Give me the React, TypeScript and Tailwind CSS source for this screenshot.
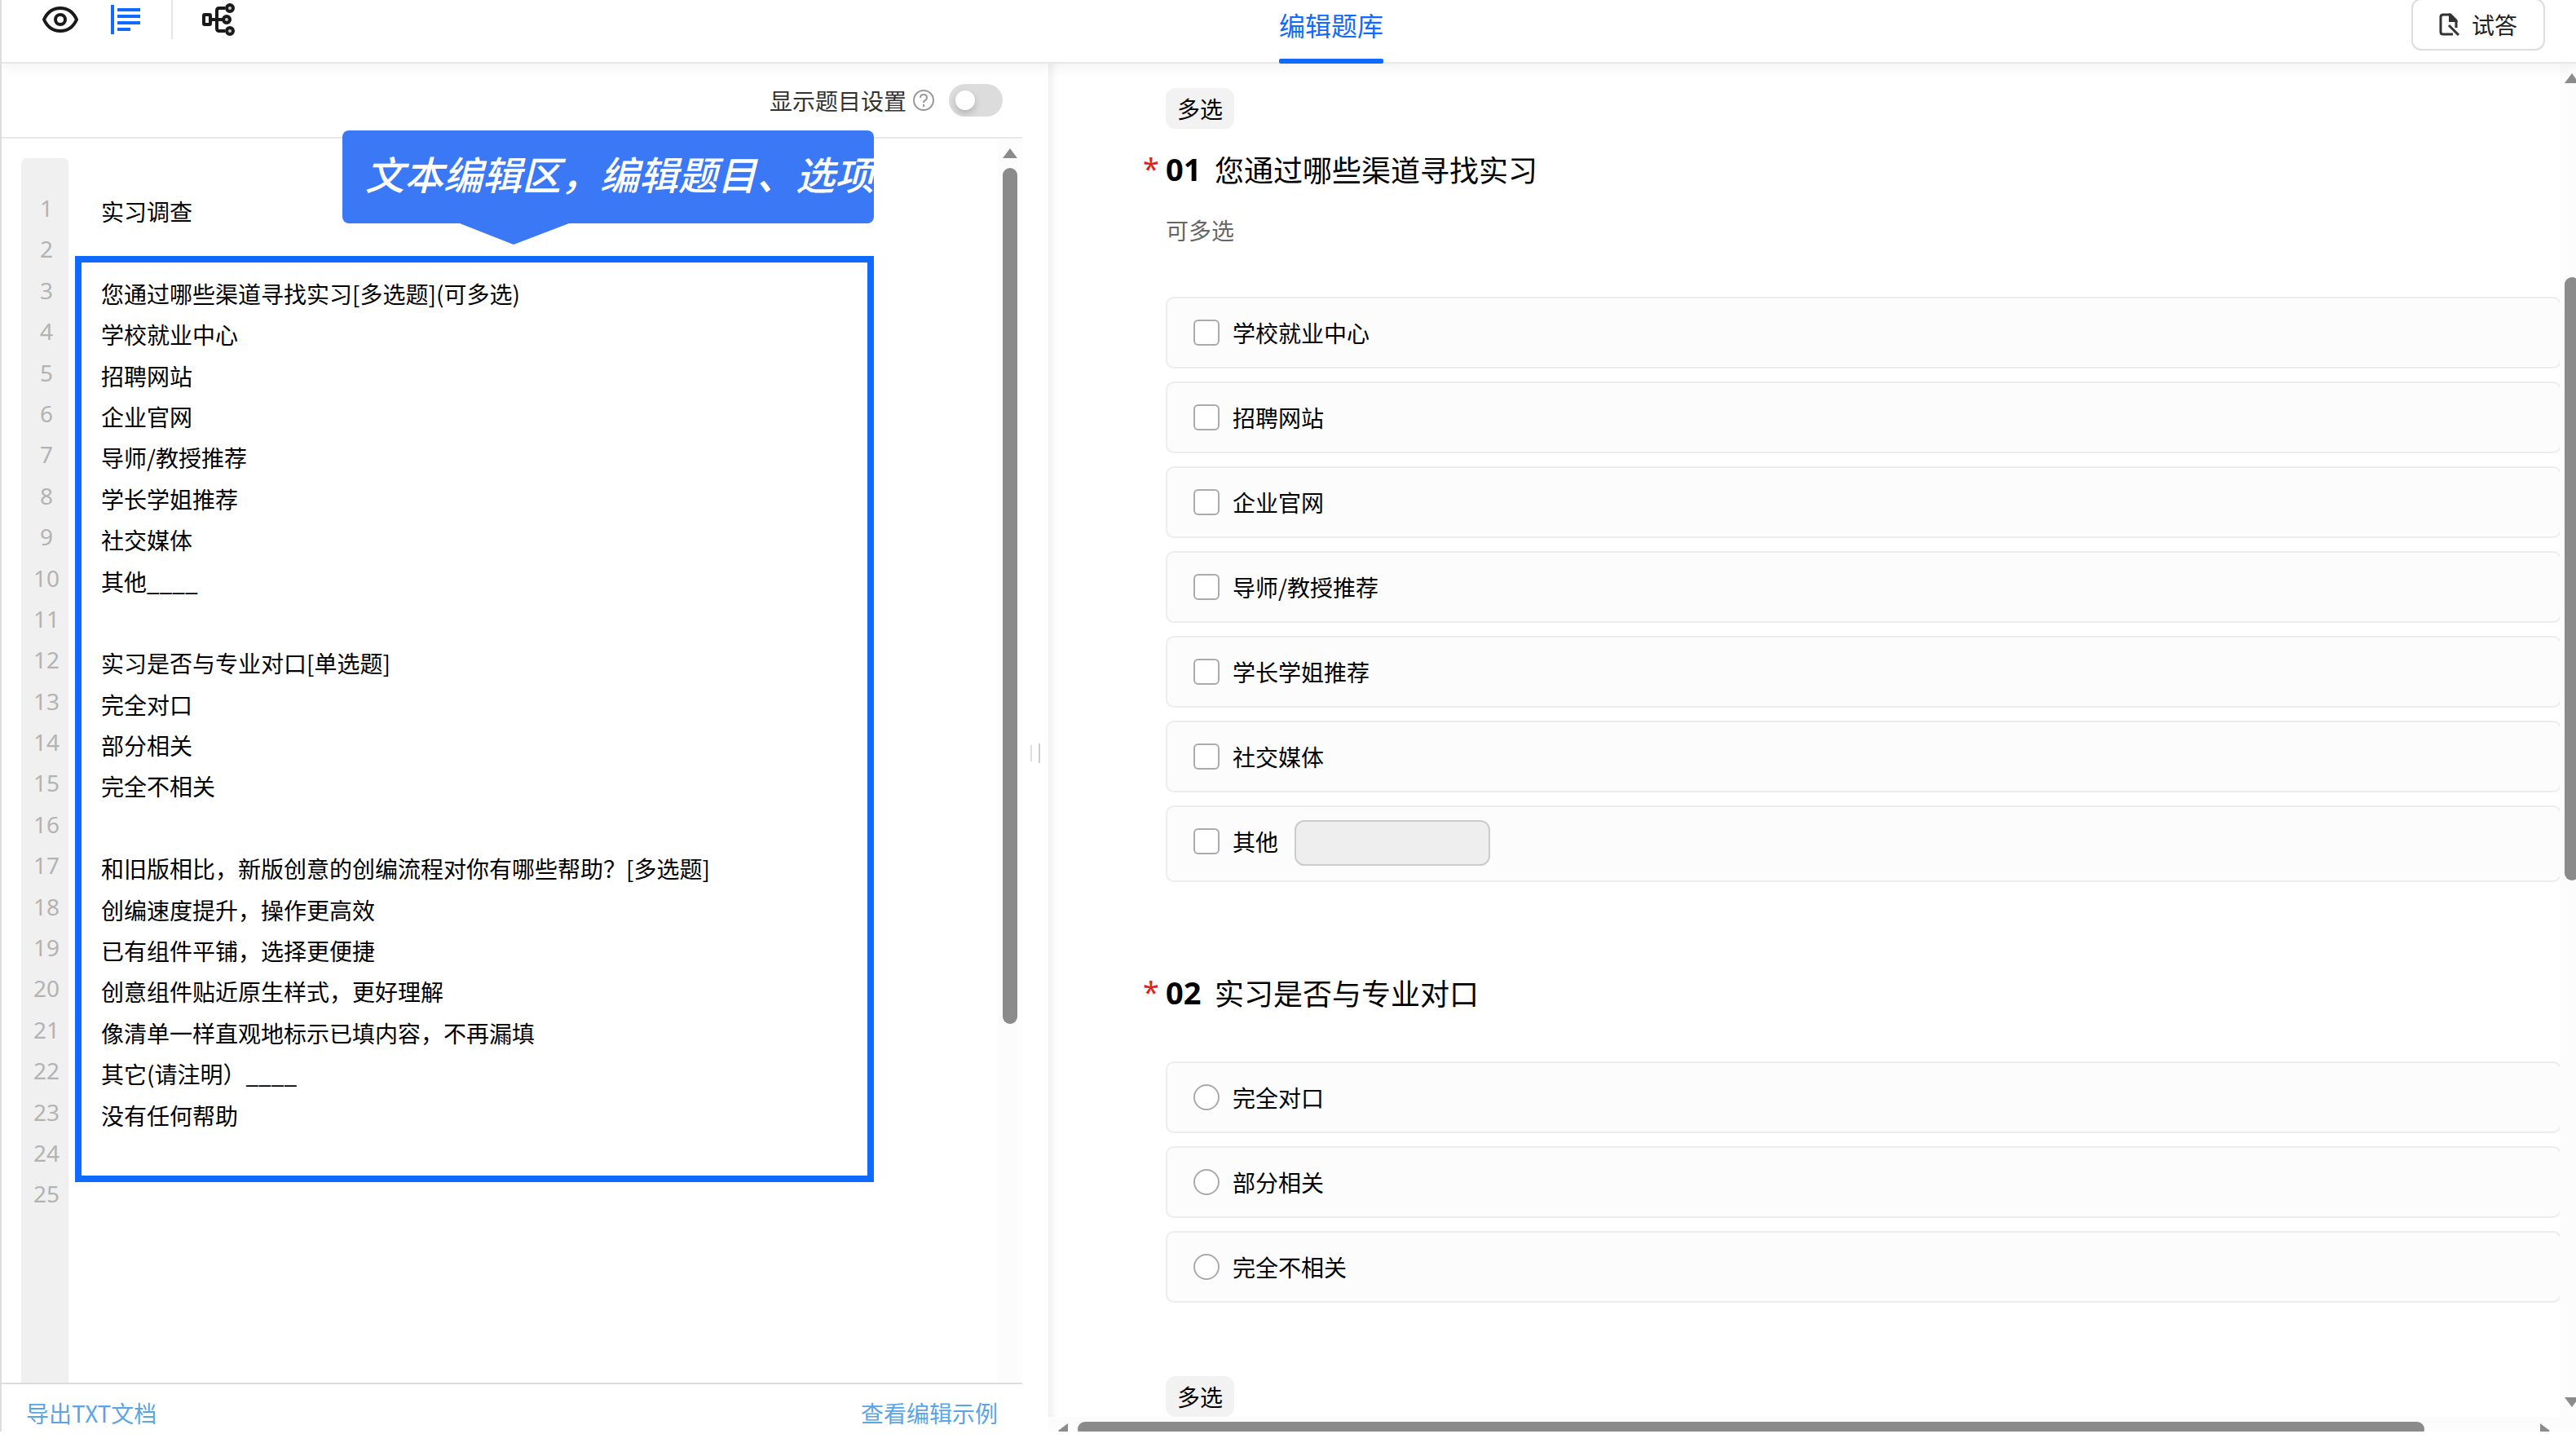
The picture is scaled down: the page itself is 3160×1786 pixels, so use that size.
import React, { useState } from 'react';

const INITIAL_TEXT = `实习调查

您通过哪些渠道寻找实习[多选题](可多选)
学校就业中心
招聘网站
企业官网
导师/教授推荐
学长学姐推荐
社交媒体
其他____

实习是否与专业对口[单选题]
完全对口
部分相关
完全不相关

和旧版相比，新版创意的创编流程对你有哪些帮助？[多选题]
创编速度提升，操作更高效
已有组件平铺，选择更便捷
创意组件贴近原生样式，更好理解
像清单一样直观地标示已填内容，不再漏填
其它(请注明）____
没有任何帮助

`;

interface Question {
    no: string;
    title: string;
    tag?: string;
    hint?: string;
    type: 'checkbox' | 'radio';
    options: { label: string; fill?: boolean }[];
}

const QUESTIONS: Question[] = [
    {
        no: '01',
        title: '您通过哪些渠道寻找实习',
        tag: '多选',
        hint: '可多选',
        type: 'checkbox',
        options: [
            { label: '学校就业中心' },
            { label: '招聘网站' },
            { label: '企业官网' },
            { label: '导师/教授推荐' },
            { label: '学长学姐推荐' },
            { label: '社交媒体' },
            { label: '其他', fill: true },
        ],
    },
    {
        no: '02',
        title: '实习是否与专业对口',
        type: 'radio',
        options: [{ label: '完全对口' }, { label: '部分相关' }, { label: '完全不相关' }],
    },
];

function EyeIcon() {
    return (
        <svg width="44" height="32" viewBox="0 0 44 32" fill="none" stroke="#1a1a1a" strokeWidth="4">
            <path d="M2 16C6 7 13 2 22 2s16 5 20 14c-4 9-11 14-20 14S6 25 2 16Z" strokeLinejoin="round" />
            <circle cx="22" cy="16" r="6" />
        </svg>
    );
}

function TextIcon() {
    return (
        <svg width="36" height="36" viewBox="0 0 36 36" fill="#0f6bff">
            <rect x="0" y="0" width="4" height="36" />
            <rect x="8" y="4" width="28" height="4" />
            <rect x="8" y="12" width="28" height="4" />
            <rect x="8" y="20" width="28" height="4" />
            <rect x="8" y="28" width="16" height="4" />
        </svg>
    );
}

function LogicIcon() {
    return (
        <svg width="40" height="40" viewBox="0 0 40 40" fill="none" stroke="#1a1a1a" strokeWidth="4">
            <rect x="2" y="14" width="8" height="12" rx="1" />
            <path d="M10 20h16M28 6h-7q-3 0-3 3v22q0 3 3 3h7" />
            <circle cx="34" cy="6" r="4" fill="#ccc" />
            <circle cx="30" cy="20" r="4" fill="#ccc" />
            <circle cx="34" cy="34" r="4" fill="#ccc" />
        </svg>
    );
}

function TryIcon() {
    return (
        <svg width="26" height="28" viewBox="0 0 26 28" fill="none" stroke="#333" strokeWidth="3">
            <path d="M17 26H5q-3 0-3-3V5q0-3 3-3h9l7 7v9" />
            <path d="M13 2v8h8Z" fill="#333" strokeWidth="2" />
            <path d="M12 15l12 12" />
        </svg>
    );
}

function HelpIcon() {
    return (
        <svg width="26" height="26" viewBox="0 0 26 26" fill="none" stroke="#999" strokeWidth="2">
            <circle cx="13" cy="13" r="12" />
            <path d="M9 10q0-4 4-4t4 4q0 2-2 3t-2 3" />
            <path d="M13 18v3" />
        </svg>
    );
}

function Arrow({ className, points }: { className?: string; points: string }) {
    return (
        <svg className={className} width="18" height="12" viewBox="0 0 18 12" fill="#8b8b8b">
            <polygon points={points} />
        </svg>
    );
}

function Tag({ children }: { children: React.ReactNode }) {
    return (
        <span className="inline-block px-[14px] text-[28px] leading-[50px] rounded-xl bg-[#f2f2f2]">
            {children}
        </span>
    );
}

function QuestionBlock({ question }: { question: Question }) {
    return (
        <div role="group" aria-labelledby={`title-${question.no}`} className="pb-[90px]">
            {question.tag && (
                <div className="flex mb-[26px]">
                    <Tag>{question.tag}</Tag>
                </div>
            )}
            <div className={question.tag ? 'flex items-center' : 'flex items-center pt-[22px]'}>
                <span className="-ml-7 w-7 font-['Noto_Sans',sans-serif] text-[36px] leading-[46px] text-[#e02020]">*</span>
                <span className="w-[44px] mr-4 font-['Noto_Sans',sans-serif] text-[38px] leading-[46px] font-bold">
                    {question.no}
                </span>
                <h2 id={`title-${question.no}`} className="text-[36px] leading-[46px]">{question.title}</h2>
            </div>
            {question.hint && <p className="mt-8 text-[28px] leading-[40px] text-[#666]">{question.hint}</p>}

            <div className="mt-[62px] -mr-0.5 flex flex-col gap-4">
                {question.options.map((option) => (
                    <div
                        key={option.label}
                        className="flex items-start pl-8 py-4 border-2 border-[#ededed] rounded-[10px] bg-[#fcfcfc]"
                    >
                        <label className="flex items-center gap-4 h-[52px] text-[28px]">
                            {question.type === 'checkbox' ? (
                                <input
                                    type="checkbox"
                                    className="appearance-none w-8 h-8 border-2 border-[#aaa] rounded-md bg-white checked:bg-[#0f6bff]"
                                />
                            ) : (
                                <input
                                    type="radio"
                                    name={`q-${question.no}`}
                                    className="appearance-none w-8 h-8 border-2 border-[#aaa] rounded-full bg-white checked:bg-[#0f6bff]"
                                />
                            )}
                            {option.label}
                        </label>
                        {option.fill && (
                            <input
                                type="text"
                                disabled
                                aria-label={option.label}
                                className="ml-5 mb-0.5 w-60 h-14 border-2 border-[#ccc] rounded-xl bg-[#eee]"
                            />
                        )}
                    </div>
                ))}
            </div>
        </div>
    );
}

export default function App() {
    const [text, setText] = useState(INITIAL_TEXT);
    const [showSettings, setShowSettings] = useState(false);

    return (
        <div className="h-screen pb-[30px] bg-white text-black font-['Noto_Sans_CJK_SC',sans-serif]">
            <div className="flex flex-col h-full overflow-hidden border-l-2 border-[#ddd]">
                {/* Top bar */}
                <header className="relative z-10 flex h-[78px] shrink-0 justify-between border-b-2 border-[#e8e8e8] bg-white shadow-[0_4px_16px_rgba(0,0,0,0.06)]">
                    <div className="flex flex-1 items-center h-12 pl-[50px]">
                        <button type="button" aria-label="预览"><EyeIcon /></button>
                        <button type="button" aria-label="文本编辑" className="ml-10"><TextIcon /></button>
                        <span className="ml-[38px] w-0.5 h-12 bg-[#e5e5e5]" />
                        <button type="button" aria-label="逻辑" className="ml-9"><LogicIcon /></button>
                    </div>
                    <a href="#edit" className="flex flex-col justify-between h-[78px] ml-[92px] text-[32px] leading-[60px] text-[#0f6bff]">
                        编辑题库
                        <span className="h-1.5 rounded-xs bg-[#0f6bff]" />
                    </a>
                    <div className="flex flex-1 justify-end pr-[38px]">
                        <button
                            type="button"
                            className="-mt-0.5 flex items-center gap-[14px] h-16 px-8 border-2 border-[#ddd] rounded-xl text-[28px] text-[#222]"
                        >
                            <TryIcon />
                            试答
                        </button>
                    </div>
                </header>

                <div className="grid flex-1 min-h-0 grid-cols-[1252fr_32px_1874fr]">
                    {/* Text editor */}
                    <section className="relative flex flex-col min-h-0">
                        <div className="flex items-center justify-end h-[92px] shrink-0 pr-6 border-b-2 border-[#e8e8e8]">
                            <label htmlFor="show-settings" className="text-[28px] text-[#333]">显示题目设置</label>
                            <span className="ml-2"><HelpIcon /></span>
                            <span className="relative ml-[18px] flex">
                                <input
                                    id="show-settings"
                                    type="checkbox"
                                    checked={showSettings}
                                    onChange={(e) => setShowSettings(e.target.checked)}
                                    className="peer appearance-none w-[66px] h-10 rounded-full bg-[#dcdcdc] checked:bg-[#0f6bff]"
                                />
                                <span className="pointer-events-none absolute left-2 top-2 w-6 h-6 rounded-full bg-white shadow-[0_4px_8px_rgba(0,0,0,0.2)] peer-checked:left-[34px]" />
                            </span>
                        </div>

                        <div className="flex flex-1 min-h-0">
                            <ol className="ml-6 mt-6 pt-9 pl-1 w-[58px] shrink-0 overflow-hidden rounded-t-md bg-[#f0f0f0] font-['Noto_Sans',sans-serif] text-[28px] leading-[1.8] text-center text-[#b3b3b3]">
                                {text.split('\n').map((_, i) => (
                                    <li key={i}>{i + 1}</li>
                                ))}
                            </ol>
                            <textarea
                                aria-label="文本编辑区"
                                spellCheck={false}
                                value={text}
                                onChange={(e) => setText(e.target.value)}
                                className="flex-1 min-w-0 mt-6 pt-10 pl-10 resize-none overflow-hidden outline-none text-[28px] leading-[1.8]"
                            />
                            <div className="flex flex-col items-center w-[30px] pt-3 bg-[#fcfcfc]">
                                <Arrow points="9,0 18,12 0,12" />
                                <div className="mt-3 w-[18px] h-[1050px] rounded-full bg-[#8b8b8b]" />
                            </div>
                        </div>

                        <div className="flex items-center justify-between h-[60px] shrink-0 pt-3 pl-[30px] pr-[30px] border-t-2 border-[#ddd] text-[28px] text-[#5aa5e8]">
                            <a href="#export">导出TXT文档</a>
                            <a href="#example">查看编辑示例</a>
                        </div>

                        {/* Guide highlight and its bubble */}
                        <div className="pointer-events-none absolute left-[90px] right-[182px] top-[236px] h-[1136px] border-8 border-[#0f6bff]" />
                        <div className="pointer-events-none absolute left-[418px] right-[182px] top-[82px]">
                            <p className="overflow-hidden h-[114px] pl-7 rounded-lg bg-[#3a78f5] text-[48px] leading-[104px] italic font-medium whitespace-nowrap text-white">
                                文本编辑区，编辑题目、选项
                            </p>
                            <svg className="ml-[144px]" width="134" height="26" viewBox="0 0 134 26" fill="#3a78f5">
                                <polygon points="0,0 134,0 66,26" />
                            </svg>
                        </div>
                    </section>

                    {/* Splitter */}
                    <div className="flex items-center justify-center gap-2 pt-[14px] cursor-col-resize">
                        <span className="w-0.5 h-5 bg-[#ddd]" />
                        <span className="w-0.5 h-6 bg-[#ccc]" />
                    </div>

                    {/* Preview */}
                    <section className="flex min-h-0 min-w-0">
                        <div className="flex flex-1 flex-col min-w-0">
                            <div className="flex-1 min-h-0 overflow-hidden pl-[144px] pt-[30px] shadow-[inset_12px_0_12px_-8px_rgba(0,0,0,0.08)]">
                                {QUESTIONS.map((question) => (
                                    <QuestionBlock key={question.no} question={question} />
                                ))}
                                <Tag>多选</Tag>
                            </div>
                            <div className="flex items-start h-[18px] shrink-0 overflow-hidden px-3 pt-1.5 bg-[#fcfcfc]">
                                <svg className="mt-0.5" width="12" height="18" viewBox="0 0 12 18" fill="#8b8b8b">
                                    <polygon points="12,0 12,18 0,9" />
                                </svg>
                                <div className="flex-1 ml-3 mr-[142px] h-[18px] rounded-full bg-[#8b8b8b]" />
                                <svg className="mt-0.5" width="12" height="18" viewBox="0 0 12 18" fill="#8b8b8b">
                                    <polygon points="0,0 12,9 0,18" />
                                </svg>
                            </div>
                        </div>
                        <div className="flex flex-col w-5 shrink-0 pt-3 pb-[30px] pl-1.5 overflow-hidden bg-[#fcfcfc]">
                            <Arrow className="shrink-0" points="9,0 18,12 0,12" />
                            <div className="mt-[238px] w-[18px] h-[740px] rounded-full bg-[#8b8b8b]" />
                            <Arrow className="mt-auto shrink-0" points="0,0 18,0 9,12" />
                        </div>
                    </section>
                </div>
            </div>
        </div>
    );
}
